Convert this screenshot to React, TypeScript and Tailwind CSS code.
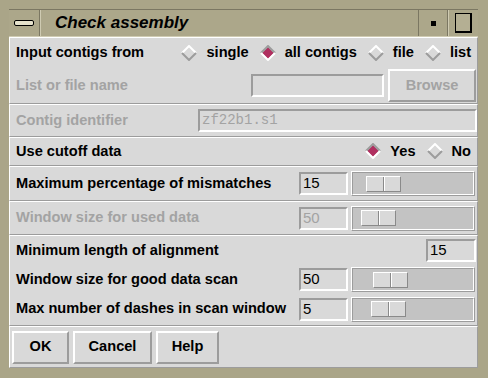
import React from "react";

const DARK = "#9c9c9c";

function Diamond({ on }: { on?: boolean }) {
  const top = on ? DARK : "#ffffff";
  const bot = on ? "#ffffff" : DARK;
  return (
    <svg width="16" height="16" viewBox="0 0 16 16" className="shrink-0">
      {on && <polygon points="8,2 14,8 8,14 2,8" fill="#b03060" />}
      <polyline points="1,8 8,1 15,8" fill="none" stroke={top} strokeWidth="2" />
      <polyline points="1,8 8,15 15,8" fill="none" stroke={bot} strokeWidth="2" />
    </svg>
  );
}

function Radio({ label, on }: { label: string; on?: boolean }) {
  return (
    <div className="flex items-center gap-[9px] font-bold">
      <Diamond on={on} />
      <span>{label}</span>
    </div>
  );
}

function Entry({ value, w, disabled, mono }: { value?: string; w: string; disabled?: boolean; mono?: boolean }) {
  return (
    <div
      className={`${w} h-[23px] shrink-0 flex items-center px-[2px] border-2 border-t-[#9c9c9c] border-l-[#9c9c9c] border-r-white border-b-white ${
        disabled ? "text-[#a3a3a3]" : "text-black"
      } ${mono ? "font-['Liberation_Mono',monospace] text-[14px]" : "text-[15px]"}`}
    >
      {value}
    </div>
  );
}

function Scale({ offset }: { offset: number }) {
  return (
    <div className="w-[124px] h-[25px] shrink-0 border border-t-white border-l-white border-r-[#9c9c9c] border-b-[#9c9c9c]">
      <div className="h-full border border-t-[#9c9c9c] border-l-[#9c9c9c] border-r-white border-b-white bg-[#c3c3c3] flex items-center">
        <div
          className="h-[16px] w-[35px] flex border-[1.5px] border-t-white border-l-white border-r-[#8a8a8a] border-b-[#8a8a8a] bg-[#d9d9d9]"
          style={{ marginLeft: offset }}
        >
          <div className="flex-1 border-r border-r-[#8a8a8a]" />
          <div className="flex-1 border-l border-l-white" />
        </div>
      </div>
    </div>
  );
}

function Button({ label, w, disabled }: { label: string; w: string; disabled?: boolean }) {
  return (
    <div
      className={`${w} h-[33px] shrink-0 flex items-center justify-center font-bold border-2 border-t-white border-l-white border-r-[#9c9c9c] border-b-[#9c9c9c] ${
        disabled ? "text-[#a3a3a3]" : "text-black"
      }`}
    >
      {label}
    </div>
  );
}

const section = "flex flex-col border border-t-white border-l-white border-r-[#9c9c9c] border-b-[#9c9c9c]";

export default function App() {
  return (
    <div className="w-[488px] h-[378px] bg-[#aaa588] flex flex-col pt-[9px] pl-[9px] pr-[10px] pb-[10px] font-['Liberation_Sans',Arial,sans-serif] text-[14.6px] text-black">
      {/* Title bar */}
      <div className="h-[28px] flex border-t border-t-[#7b7762] border-b border-b-[#cfcbb2] bg-[#aca78a]">
        <div className="w-[31px] flex items-center justify-center border-r border-r-[#7b7762]">
          <div className="w-[20px] h-[6px] rounded-[2px] border border-black bg-[#e6e2cc]" />
        </div>
        <div className="flex-1 flex items-center pl-[14px] text-[17px] font-bold italic border-l border-l-[#cfcbb2]">
          Check assembly
        </div>
        <div className="w-[30px] flex items-center justify-center border-l border-l-[#7b7762] border-r border-r-[#7b7762]">
          <div className="w-[5px] h-[5px] bg-black" />
        </div>
        <div className="w-[30px] flex items-center justify-center border-l border-l-[#cfcbb2]">
          <div className="w-[17px] h-[20px] border border-black border-r-2 border-b-2 bg-[#b4af93]" />
        </div>
      </div>

      {/* Content */}
      <div className="flex-1 bg-[#d9d9d9] flex flex-col">
        <div className={`${section} h-[67px]`}>
          <div className="h-[30px] flex items-center pl-[6px] pr-[6px]">
            <span className="font-bold flex-1">Input contigs from</span>
            <div className="flex items-center gap-[11px]">
              <Radio label="single" />
              <Radio label="all contigs" on />
              <Radio label="file" />
              <Radio label="list" />
            </div>
          </div>
          <div className="h-[35px] flex items-center pl-[6px] pr-[1px]">
            <span className="font-bold flex-1 text-[#a3a3a3]">List or file name</span>
            <Entry w="w-[133px]" />
            <div className="w-[4px]" />
            <Button label="Browse" w="w-[88px]" disabled />
          </div>
        </div>

        <div className={`${section} h-[33px] flex-row items-center pl-[6px] pr-0`}>
          <span className="font-bold flex-1 text-[#a3a3a3]">Contig identifier</span>
          <Entry w="w-[279px]" value="zf22b1.s1" disabled mono />
        </div>

        <div className={`${section} h-[29px] flex-row items-center pl-[6px] pr-[6px]`}>
          <span className="font-bold flex-1">Use cutoff data</span>
          <div className="flex items-center gap-[11px]">
            <Radio label="Yes" on />
            <Radio label="No" />
          </div>
        </div>

        <div className={`${section} h-[35px] flex-row items-center pl-[6px] pr-[2px]`}>
          <span className="font-bold flex-1">Maximum percentage of mismatches</span>
          <Entry w="w-[49px]" value="15" />
          <div className="w-[3px]" />
          <Scale offset={13} />
        </div>

        <div className={`${section} h-[34px] flex-row items-center pl-[6px] pr-[2px]`}>
          <span className="font-bold flex-1 text-[#a3a3a3]">Window size for used data</span>
          <Entry w="w-[49px]" value="50" disabled />
          <div className="w-[3px]" />
          <Scale offset={8} />
        </div>

        <div className={`${section} h-[91px] pb-[1px]`}>
          <div className="h-[29px] flex items-center pl-[6px] pr-[1px]">
            <span className="font-bold flex-1">Minimum length of alignment</span>
            <Entry w="w-[50px]" value="15" />
          </div>
          <div className="h-[29px] flex items-center pl-[6px] pr-[2px]">
            <span className="font-bold flex-1">Window size for good data scan</span>
            <Entry w="w-[49px]" value="50" />
            <div className="w-[3px]" />
            <Scale offset={20} />
          </div>
          <div className="h-[30px] flex items-center pl-[6px] pr-[2px]">
            <span className="font-bold flex-1">Max number of dashes in scan window</span>
            <Entry w="w-[49px]" value="5" />
            <div className="w-[3px]" />
            <Scale offset={18} />
          </div>
        </div>

        <div className={`${section} flex-1 flex-row items-center gap-[4px] pl-[2px]`}>
          <Button label="OK" w="w-[57px]" />
          <Button label="Cancel" w="w-[79px]" />
          <Button label="Help" w="w-[63px]" />
        </div>
      </div>
    </div>
  );
}
